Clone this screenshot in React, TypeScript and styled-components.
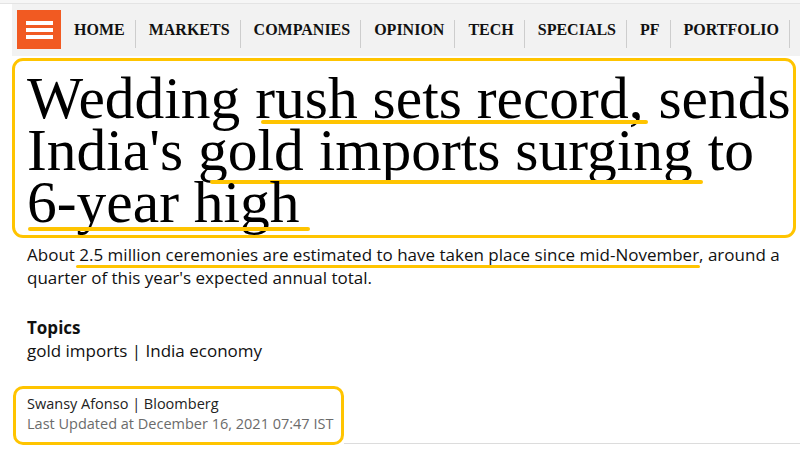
import React from "react";
import styled, { createGlobalStyle } from "styled-components";

const GlobalStyle = createGlobalStyle`
  body {
    margin: 0;
    background: #fff;
    font-family: "Open Sans", "Liberation Sans", sans-serif;
  }
`;

const YELLOW = "#ffc400";

const navItems = ["HOME", "MARKETS", "COMPANIES", "OPINION", "TECH", "SPECIALS", "PF", "PORTFOLIO"];

function App() {
  return (
    <Page>
      <GlobalStyle />
      <TopStrip />
      <NavBar>
        <Burger aria-label="menu">
          <span />
          <span />
          <span />
        </Burger>
        {navItems.map((item) => (
          <NavItem key={item}>{item}</NavItem>
        ))}
      </NavBar>

      <Main>
        <HeadlineBox>
          <Headline>
            <Line>
              Wedding{" "}
              <Mark $drop={7} $left={6} $right={-4}>
                rush sets record,
              </Mark>{" "}
              sends
            </Line>
            <Line>
              India's{" "}
              <Mark $drop={-1} $left={12} $right={-10}>
                gold imports surging
              </Mark>{" "}
              to
            </Line>
            <Line>
              <Mark $drop={4} $left={1} $right={-10}>
                6-year high
              </Mark>
            </Line>
          </Headline>
        </HeadlineBox>

        <Summary>
          About <TextMark>2.5 million ceremonies are estimated to have taken place since mid-November</TextMark>,
          around a quarter of this year's expected annual total.
        </Summary>

        <Topics>
          <TopicsTitle>Topics</TopicsTitle>
          <TopicsList>gold imports | India economy</TopicsList>
        </Topics>

        <BylineRow>
          <BylineBox>
            <Author>Swansy Afonso | Bloomberg</Author>
            <Updated>Last Updated at December 16, 2021 07:47 IST</Updated>
          </BylineBox>
          <Rule />
        </BylineRow>
      </Main>
    </Page>
  );
}

export default App;

const Page = styled.div`
  width: 800px;
  height: 458px;
  overflow: hidden;
`;

const TopStrip = styled.div`
  height: 3px;
  background: #f6f6f6;
  border-bottom: 1px solid #e4e4e4;
`;

const NavBar = styled.nav`
  display: flex;
  align-items: flex-start;
  height: 52px;
  margin-left: 12px;
  padding-left: 5px;
  background: #f2f2f2;
`;

const Burger = styled.div`
  display: flex;
  flex-direction: column;
  justify-content: center;
  gap: 3px;
  width: 44px;
  height: 39px;
  margin-top: 6px;
  padding: 0 8px 0 9px;
  box-sizing: border-box;
  background: #f15a22;

  span {
    display: block;
    height: 4px;
    background: #fff;
  }
`;

const NavItem = styled.div`
  height: 28px;
  margin-top: 16px;
  padding: 1px 10px 0 13px;
  box-sizing: border-box;
  border-right: 1px solid #cdcdcd;
  font-family: "Liberation Serif", serif;
  font-weight: 700;
  font-size: 16px;
  line-height: 18px;
  color: #111;
  white-space: nowrap;

  &:first-of-type {
    padding-left: 16px;
  }
`;

const Main = styled.main`
  padding: 2px 4px 0 12px;
`;

const HeadlineBox = styled.div`
  border: 3px solid ${YELLOW};
  border-radius: 11px;
  padding: 11px 8px 7px 12px;
`;

const Headline = styled.h1`
  margin: 0;
  font-family: "Liberation Serif", serif;
  font-weight: 400;
  font-size: 59.5px;
  line-height: 52px;
  color: #000;
`;

const Line = styled.span`
  display: block;
  white-space: nowrap;
`;

const Mark = styled.span<{ $drop: number; $left: number; $right: number }>`
  position: relative;

  &::after {
    content: "";
    position: absolute;
    left: ${(p) => p.$left}px;
    right: ${(p) => p.$right}px;
    bottom: ${(p) => p.$drop}px;
    height: 4px;
    border-radius: 2px;
    background: ${YELLOW};
  }
`;

const Summary = styled.p`
  margin: 5px 0 0 15px;
  font-size: 17px;
  line-height: 23px;
  color: #111;
`;

const TextMark = styled.span`
  position: relative;

  &::after {
    content: "";
    position: absolute;
    left: -3px;
    right: -1px;
    bottom: -2px;
    height: 3px;
    border-radius: 2px;
    background: ${YELLOW};
  }
`;

const Topics = styled.div`
  margin: 27px 0 0 15px;
  font-size: 17px;
  line-height: 23px;
  color: #111;
`;

const TopicsTitle = styled.div`
  font-weight: 700;
`;

const TopicsList = styled.div``;

const BylineRow = styled.div`
  display: flex;
  align-items: flex-end;
  margin-top: 24px;
  margin-right: -4px;
`;

const BylineBox = styled.div`
  border: 3px solid ${YELLOW};
  border-radius: 10px;
  margin-left: 1px;
  padding: 5px 8px 8px 11px;
  font-size: 14.5px;
  line-height: 20px;
`;

const Author = styled.div`
  color: #222;
`;

const Updated = styled.div`
  color: #6b6b6b;
`;

const Rule = styled.div`
  flex: 1;
  border-bottom: 1px solid #dcdcdc;
  margin-bottom: 1px;
`;
